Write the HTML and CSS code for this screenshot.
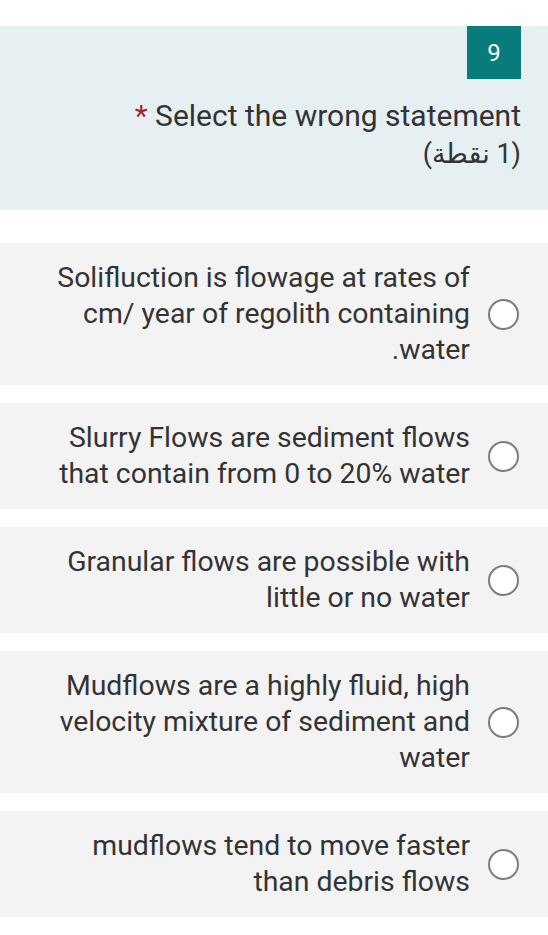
FILE: index.html
```html
<!DOCTYPE html>
<html lang="ar">
<head>
  <meta charset="UTF-8">
  <meta name="viewport" content="width=device-width, initial-scale=1.0">
  <title>Question 9</title>
  <link rel="stylesheet" href="styles.css">
</head>
<body>
  <div class="question-head">
    <div class="q-number">9</div>
    <div class="q-title"><span class="required">*</span> Select the wrong statement</div>
    <div class="q-points" dir="rtl">(1 نقطة)</div>
  </div>

  <div class="options">
    <label class="option" dir="rtl">
      <span class="radio"></span>
      <span class="option-text">Solifluction is flowage at rates of cm/ year of regolith containing water.</span>
    </label>
    <label class="option" dir="rtl">
      <span class="radio"></span>
      <span class="option-text">Slurry Flows are sediment flows that contain from 0 to 20% water</span>
    </label>
    <label class="option" dir="rtl">
      <span class="radio"></span>
      <span class="option-text">Granular flows are possible with little or no water</span>
    </label>
    <label class="option" dir="rtl">
      <span class="radio"></span>
      <span class="option-text">Mudflows are a highly fluid, high velocity mixture of sediment and water</span>
    </label>
    <label class="option" dir="rtl">
      <span class="radio"></span>
      <span class="option-text">mudflows tend to move faster than debris flows</span>
    </label>
  </div>
</body>
</html>
```

FILE: styles.css
```css
* { box-sizing: border-box; margin: 0; padding: 0; }
body { background: #fff; font-family: Roboto, "DejaVu Sans", sans-serif; color: #333; }

.question-head { margin-top: 26px; background: #e6eff2; padding: 0 27px 37px; display: flex; flex-direction: column; align-items: flex-end; }
.q-number { width: 54px; height: 53px; background: #087b7b; color: #fff; font-size: 24px; display: flex; align-items: center; justify-content: center; }
.q-title { margin-top: 18px; font-size: 30px; line-height: 38px; text-align: right; color: #333; }
.required { color: #a4262c; }
.q-points { font-size: 27px; line-height: 38px; color: #333; }

.options { margin-top: 33px; display: flex; flex-direction: column; gap: 18px; }
.option { display: flex; align-items: center; gap: 18px; background: #f3f3f3; padding: 17px 29px 17px 46px; cursor: pointer; }
.radio { flex: none; width: 31px; height: 31px; border: 2px solid #7d7d7d; border-radius: 50%; background: #fff; }
.option-text { flex: 1; font-size: 28.4px; line-height: 36px; color: #333; }
```
